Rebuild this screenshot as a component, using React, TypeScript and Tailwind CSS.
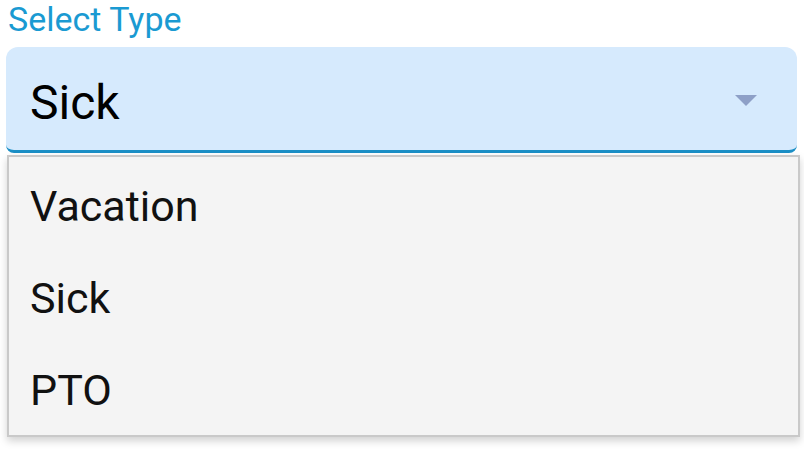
import React from "react";

const options = ["Vacation", "Sick", "PTO"];

export default function App() {
  return (
    <div
      className="w-[804px] h-[454px] bg-white overflow-hidden"
      style={{ fontFamily: "Roboto, 'Noto Sans', sans-serif" }}
    >
      {/* label */}
      <div className="h-[47px] pl-[8px]">
        <div className="text-[34px] leading-[38px] text-[#1a9ad2]">Select Type</div>
      </div>

      {/* select field */}
      <div className="ml-[6px] w-[791px] h-[106px] flex items-center justify-between bg-[#d6eafd] rounded-t-[12px] rounded-b-[8px] border-b-[3px] border-[#1b8fc6] pl-[24px] pr-[40px]">
        <span className="text-[48px] leading-none text-black pt-[9px]">Sick</span>
        <svg width="22" height="11" viewBox="0 0 22 11" className="mt-[4px]">
          <path d="M0 0 L22 0 L11 11 Z" fill="#8ea0c7" />
        </svg>
      </div>

      {/* options menu */}
      <div className="mt-[2px] ml-[7px] w-[793px] h-[282px] bg-[#f4f4f4] border-2 border-[#c9c9c9] shadow-[0_4px_8px_rgba(0,0,0,0.18)] pt-[3px]">
        {options.map((o) => (
          <div key={o} className="h-[92px] flex items-center pl-[21px]">
            <span className="text-[43px] leading-none text-[#111] pt-[1px]">{o}</span>
          </div>
        ))}
      </div>
    </div>
  );
}
